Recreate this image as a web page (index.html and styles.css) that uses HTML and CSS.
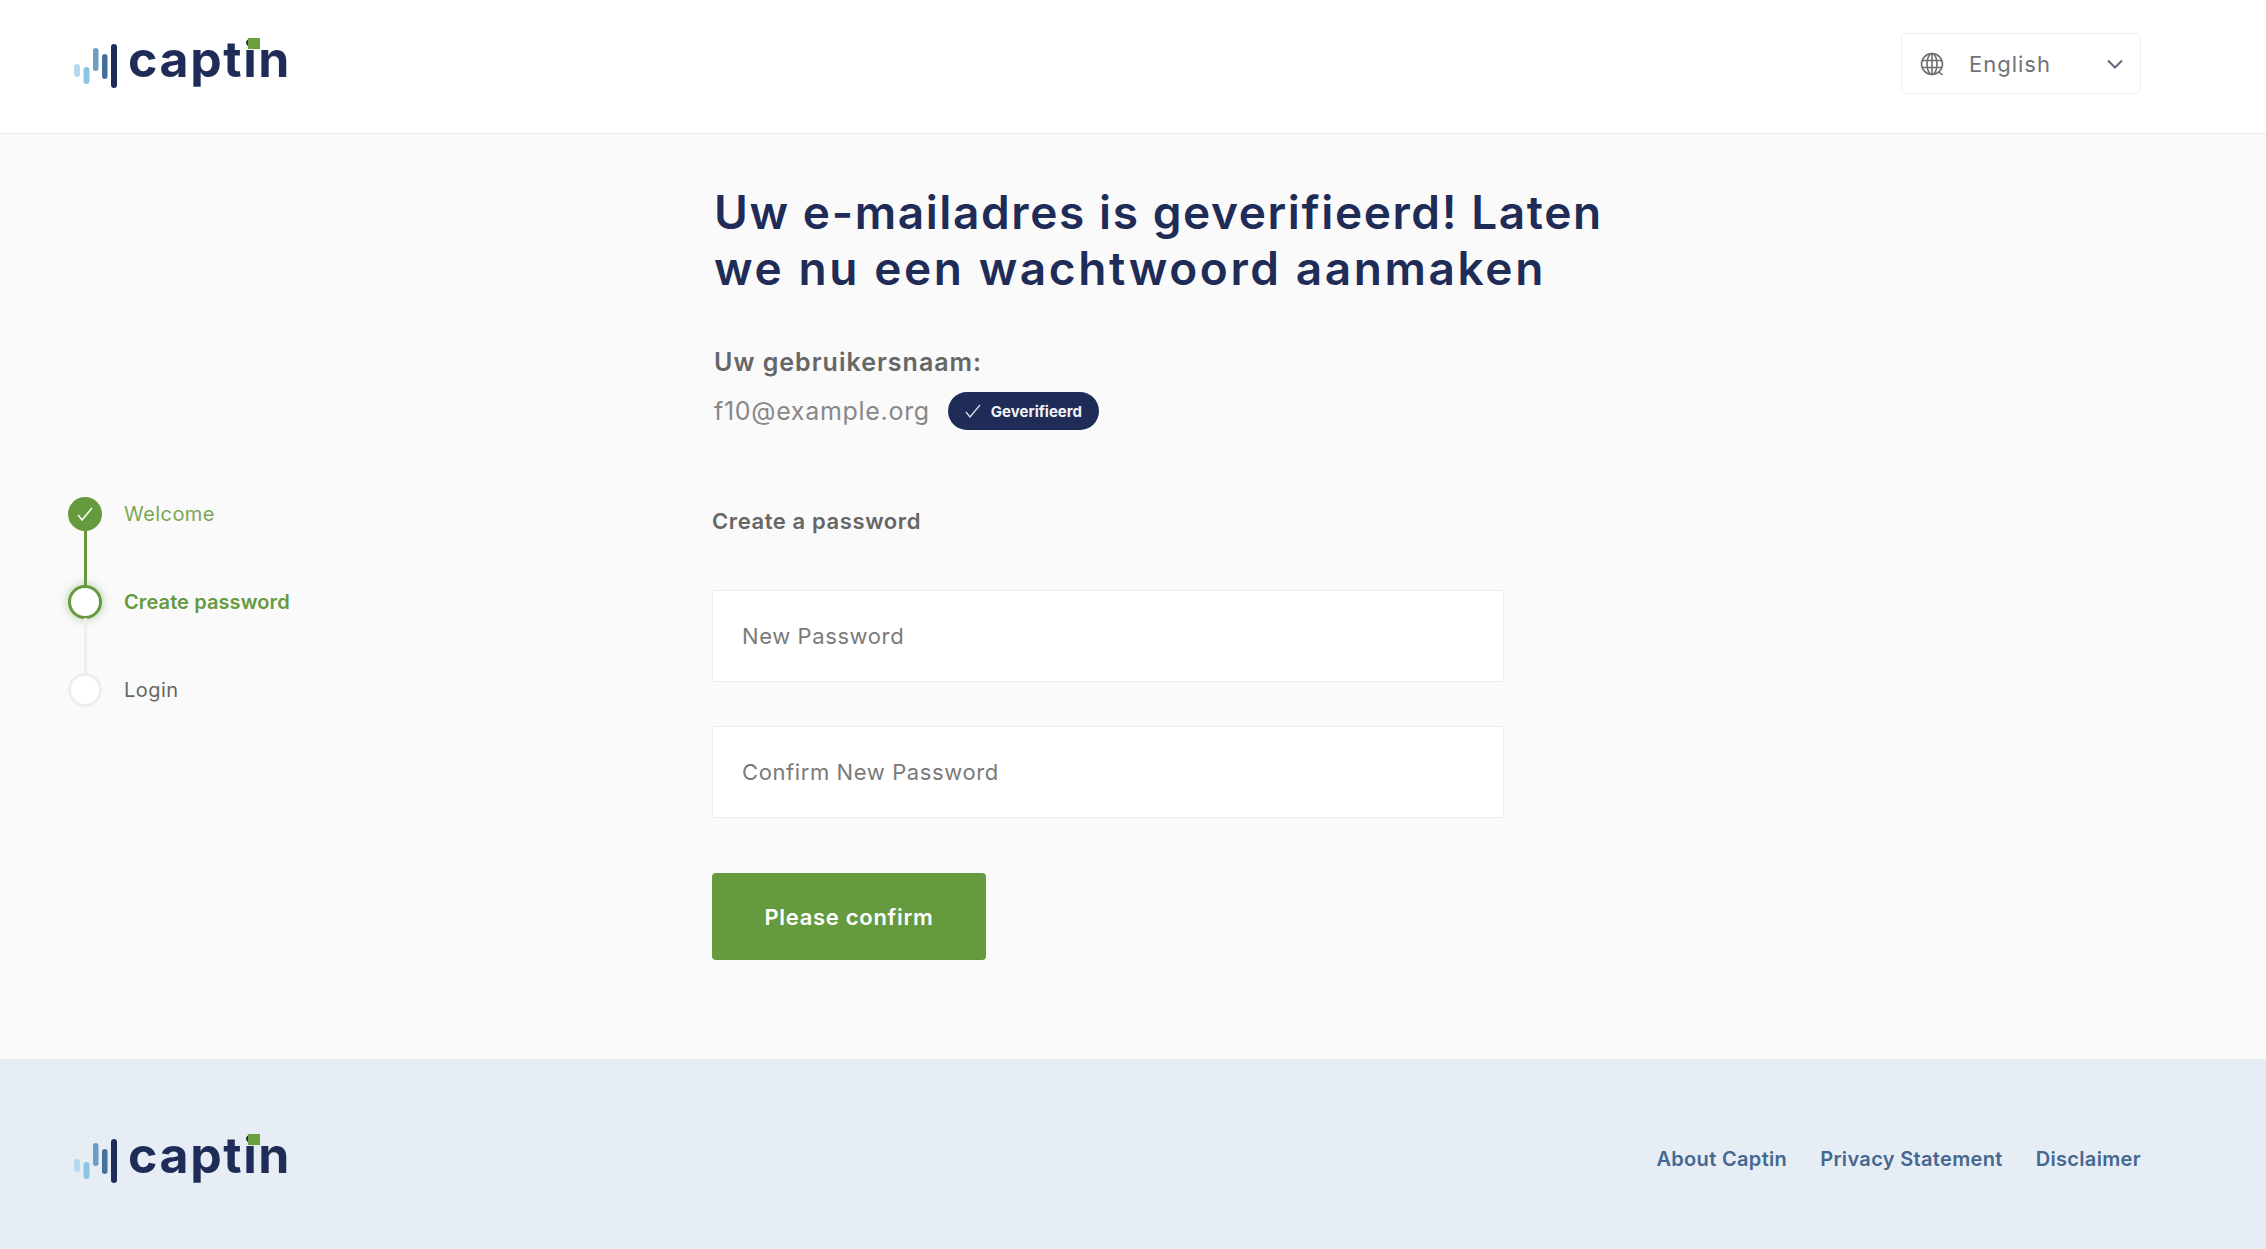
FILE: index.html
```html
<!DOCTYPE html>
<html lang="en">
<head>
  <meta charset="UTF-8">
  <title>Captin</title>
  <link rel="stylesheet" href="styles.css">
</head>
<body>
  <header class="topbar">
    <a class="logo" href="#">
      <svg class="logo-bars" viewBox="0 0 43 44" width="43" height="44">
        <rect x="0" y="20" width="6" height="13" rx="3" fill="#b5daf0"/>
        <rect x="9.5" y="23" width="6" height="17" rx="3" fill="#8cc5e4"/>
        <rect x="19" y="4" width="5.5" height="23" rx="2.75" fill="#6d9cc4"/>
        <rect x="28" y="10" width="5.5" height="25" rx="2.75" fill="#44709a"/>
        <rect x="37" y="0" width="6" height="44" rx="3" fill="#1f2c57"/>
      </svg>
      <span class="logo-word">captin<i class="logo-dot"></i></span>
    </a>
    <div class="lang">
      <svg class="lang-globe" viewBox="0 0 24 24" width="24" height="24" fill="none" stroke="#6f6f6f" stroke-width="1.6">
        <circle cx="12" cy="12" r="10.5"/>
        <ellipse cx="12" cy="12" rx="5" ry="10.5"/>
        <path d="M12 1.5v21M2.2 8.5h19.6M2.2 15.5h19.6M19 20l3.5 3"/>
      </svg>
      <span class="lang-name">English</span>
      <svg class="lang-arrow" viewBox="0 0 16 10" width="16" height="10" fill="none" stroke="#5f6b7a" stroke-width="2">
        <path d="M1 1.5l7 7 7-7"/>
      </svg>
    </div>
  </header>

  <main class="page">
    <aside class="steps">
      <div class="step step-done">
        <span class="dot">
          <svg viewBox="0 0 16 14" width="16" height="14" fill="none" stroke="#fff" stroke-width="1.5"><path d="M1 8l4 5L15 1"/></svg>
        </span>
        <span>Welcome</span>
      </div>
      <div class="step step-active">
        <span class="dot"></span>
        <span>Create password</span>
      </div>
      <div class="step">
        <span class="dot"></span>
        <span>Login</span>
      </div>
    </aside>

    <section class="content">
      <h1>Uw e-mailadres is geverifieerd! Laten<br><span class="h1-second">we nu een wachtwoord aanmaken</span></h1>
      <div class="username">
        <h2>Uw gebruikersnaam:</h2>
        <div class="email-row">
          <span class="email">f10@example.org</span>
          <span class="badge">
            <svg viewBox="0 0 16 14" width="16" height="14" fill="none" stroke="#d5d8e2" stroke-width="1.4"><path d="M1 8l4 5L15 1"/></svg>
            Geverifieerd
          </span>
        </div>
      </div>
      <form class="password-form">
        <h3>Create a password</h3>
        <input class="field" type="password" placeholder="New Password">
        <input class="field" type="password" placeholder="Confirm New Password">
        <button class="submit" type="button">Please confirm</button>
      </form>
    </section>
  </main>

  <footer class="footer">
    <a class="logo" href="#">
      <svg class="logo-bars" viewBox="0 0 43 44" width="43" height="44">
        <rect x="0" y="20" width="6" height="13" rx="3" fill="#b5daf0"/>
        <rect x="9.5" y="23" width="6" height="17" rx="3" fill="#8cc5e4"/>
        <rect x="19" y="4" width="5.5" height="23" rx="2.75" fill="#6d9cc4"/>
        <rect x="28" y="10" width="5.5" height="25" rx="2.75" fill="#44709a"/>
        <rect x="37" y="0" width="6" height="44" rx="3" fill="#1f2c57"/>
      </svg>
      <span class="logo-word">captin<i class="logo-dot"></i></span>
    </a>
    <nav class="footer-links">
      <a href="#">About Captin</a>
      <a href="#">Privacy Statement</a>
      <a href="#">Disclaimer</a>
    </nav>
  </footer>
</body>
</html>
```

FILE: styles.css
```css
* {
  box-sizing: border-box;
}

body {
  margin: 0;
  min-height: 1249px;
  display: flex;
  flex-direction: column;
  font-family: Inter, "Open Sans", sans-serif;
  background-color: #fafafa;
  color: #666;
}

a {
  text-decoration: none;
}

.topbar {
  height: 134px;
  padding: 0 125px 6px 74px;
  display: flex;
  align-items: center;
  justify-content: space-between;
  background-color: #fff;
  border-bottom: 1px solid #e9e9e9;
}

.logo {
  margin-top: 4px;
  display: flex;
  align-items: center;
  gap: 11px;
}

.logo-word {
  position: relative;
  margin-top: -13px;
  font-size: 50px;
  line-height: 44px;
  font-weight: 700;
  letter-spacing: 1.6px;
  color: #1f2c57;
}

.logo-dot {
  position: absolute;
  top: 1px;
  right: 31px;
  width: 12px;
  height: 11px;
  background-color: #6a9f3c;
}

.lang {
  width: 240px;
  height: 61px;
  padding: 0 17px 0 18px;
  display: flex;
  align-items: center;
  background-color: #fff;
  border: 1px solid #eee;
  border-radius: 5px;
}

.lang-name {
  margin-left: 25px;
  font-size: 22px;
  letter-spacing: 1px;
  color: #6f7378;
}

.lang-arrow {
  margin-left: auto;
}

.page {
  flex: 1;
  display: flex;
}

.steps {
  width: 712px;
  padding: 10px 0 0 68px;
  display: flex;
  flex-direction: column;
  justify-content: center;
  gap: 54px;
}

.step {
  position: relative;
  display: flex;
  align-items: center;
  gap: 22px;
  font-size: 20px;
  letter-spacing: 0.45px;
  color: #666;
}

.dot {
  width: 34px;
  height: 34px;
  display: flex;
  align-items: center;
  justify-content: center;
  background-color: #fff;
  border: 3px solid #eee;
  border-radius: 50%;
}

/* connector to the next step */
.step:not(:last-child)::after {
  content: "";
  position: absolute;
  left: 15.5px;
  top: 33px;
  width: 3px;
  height: 55px;
  background-color: #eee;
}

.step-done {
  color: #7ba655;
}

.step-done .dot {
  background-color: #669a3f;
  border-color: #669a3f;
}

.step-done::after {
  background-color: #669a3f !important;
}

.step-active {
  color: #669a3f;
  font-weight: 600;
  letter-spacing: 0.1px;
}

.step-active .dot {
  border-color: #669a3f;
  box-shadow: 0 0 10px rgba(102, 154, 63, 0.5);
}

.content {
  flex: 1;
  padding-top: 50px;
}

h1 {
  margin: 0 0 0 2px;
  font-size: 46px;
  line-height: 56px;
  font-weight: 600;
  letter-spacing: 1.6px;
  color: #1f2c57;
}

.h1-second {
  letter-spacing: 2.6px;
}

.username {
  margin: 50px 0 0 2px;
}

h2 {
  margin: 0;
  font-size: 25px;
  line-height: 32px;
  font-weight: 600;
  letter-spacing: 1px;
  color: #666;
}

.email-row {
  margin-top: 14px;
  display: flex;
  align-items: center;
  gap: 18px;
}

.email {
  font-size: 25px;
  letter-spacing: 0.7px;
  color: #888;
}

.badge {
  width: 151px;
  height: 38px;
  display: flex;
  align-items: center;
  justify-content: center;
  gap: 10px;
  font-size: 15px;
  font-weight: 700;
  color: #f2f3f7;
  background-color: #1f2c57;
  border-radius: 19px;
}

.password-form {
  margin-top: 76px;
  display: flex;
  flex-direction: column;
  align-items: flex-start;
}

h3 {
  margin: 0 0 54px;
  font-size: 22px;
  line-height: 30px;
  font-weight: 600;
  letter-spacing: 0.6px;
  color: #666;
}

.field {
  width: 792px;
  height: 92px;
  margin-bottom: 44px;
  padding: 0 29px;
  font-family: inherit;
  font-size: 22px;
  letter-spacing: 0.6px;
  color: #666;
  background-color: #fff;
  border: 1px solid #eee;
  border-radius: 3px;
}

.field::placeholder {
  color: #7a7a7a;
}

.submit {
  width: 274px;
  height: 87px;
  margin-top: 11px;
  font-family: inherit;
  font-size: 22px;
  font-weight: 600;
  letter-spacing: 0.7px;
  color: #fff;
  background-color: #669a3f;
  border: none;
  border-radius: 4px;
  cursor: pointer;
}

.footer {
  height: 190px;
  padding: 10px 125px 0 74px;
  display: flex;
  align-items: center;
  justify-content: space-between;
  background-color: #e6edf5;
}

.footer-links {
  display: flex;
  gap: 33px;
}

.footer-links a {
  font-size: 20px;
  font-weight: 600;
  letter-spacing: 0.33px;
  color: #44688f;
}
```
